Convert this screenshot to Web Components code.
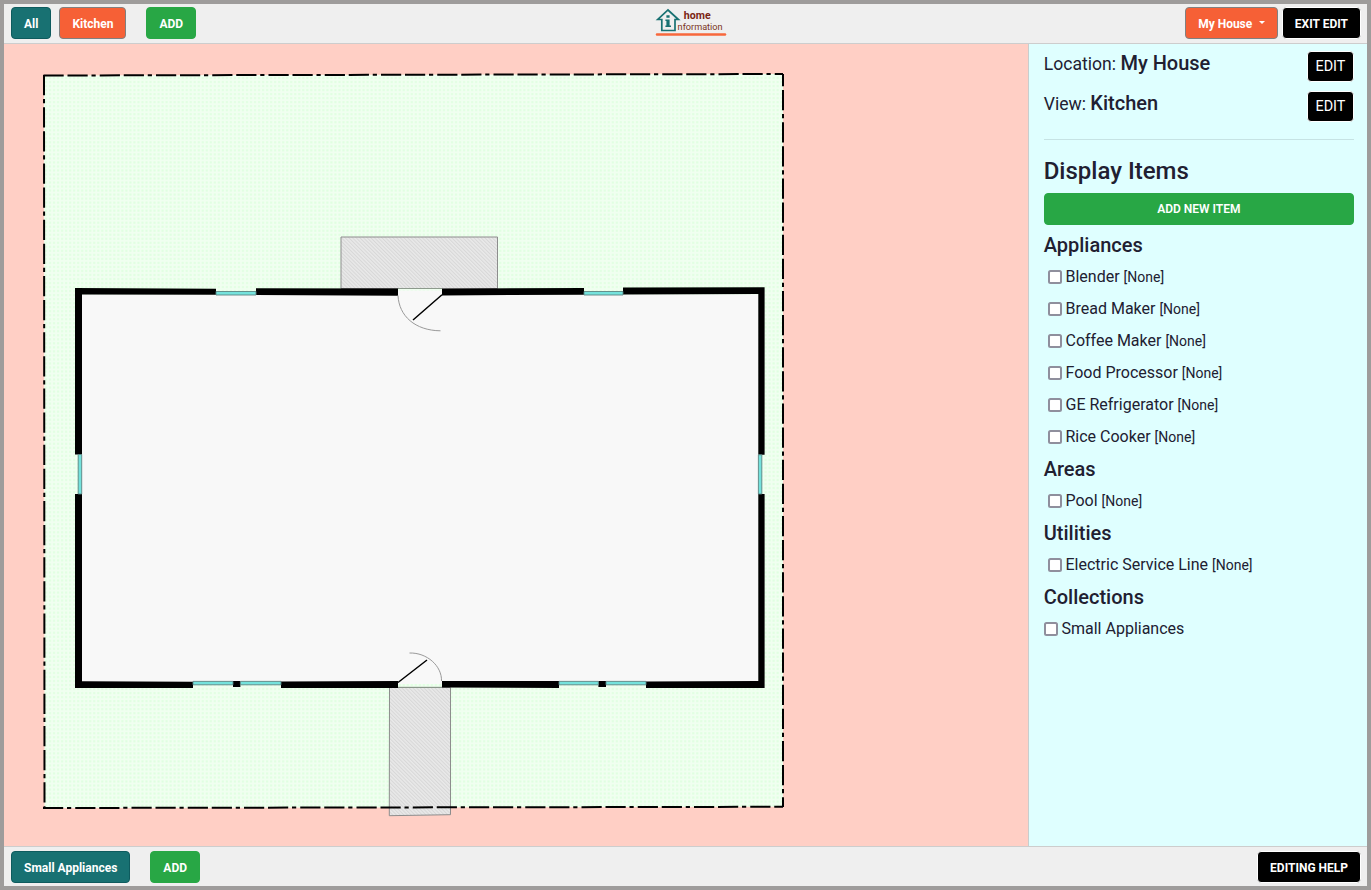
<!DOCTYPE html>
<html lang="en">
<head>
<meta charset="utf-8">
<title>Home Information</title>
<style>
html,body{margin:0;height:100%;background:#9e9c9b}
body{font-family:Roboto,sans-serif;font-size:16px;line-height:1.5;color:#212529}
</style>
</head>
<body>
<hi-app></hi-app>
<script>
function define(name, html, after){
  const t=document.createElement('template');
  t.innerHTML=html;
  customElements.define(name, class extends HTMLElement{
    constructor(){
      super();
      this.attachShadow({mode:'open'}).appendChild(t.content.cloneNode(true));
    }
    connectedCallback(){ if(after) after(this, this.shadowRoot); }
  });
}

define('hi-button', `
<style>
:host{display:inline-block;flex:none}
button{display:flex;align-items:center;justify-content:center;box-sizing:border-box;width:100%;height:32px;margin:0;padding:2px 12px 0;border:1px solid #28a745;border-radius:4px;background:#28a745;color:#fff;font:700 12px/20px Roboto,sans-serif;white-space:nowrap}
:host([kind=teal]) button{background:#187172;border-color:#0e5b5e}
:host([kind=orange]) button{background:#f66036;border-color:#808080}
:host([kind=black]) button{background:#000;border:1px solid #fff;border-radius:4px}
:host([kind=plain]) button{background:#000;border:1px solid #fff;border-radius:4px;font-weight:400;font-size:14.4px;padding:0 7.6px;height:31px;line-height:21px}
:host([kind=wide]){display:block}
:host([kind=wide]) button{font-weight:600;padding-top:0}
i{display:none;width:0;height:0;margin:0 0 3px 6.6px;border:3.5px solid transparent;border-top-color:#fff;border-bottom:0}
:host([menu]) i{display:block}
</style><button><slot></slot><i></i></button>`);

define('hi-logo', `
<style>:host{display:block;width:72px;height:30px}svg{display:block}</style>
<svg width="72" height="30" viewBox="655 7 72 30">
<path d="M661.8 19.5H657.8L668 10L678.4 19.5H675V30.5H661.8Z" fill="none" stroke="#187172" stroke-width="1.7"/>
<path d="M666.4 15.2h3.2v2.6h-3.2zM665.4 19.5h4.2v6h1.4v1.6h-5.6v-1.6h1v-4.4h-1z" fill="#187172"/>
<rect x="677" y="21" width="3" height="10" fill="#efefef"/>
<text x="683.7" y="18.5" font-family="Roboto,sans-serif" font-size="10.6" font-weight="700" fill="#7a2412" textLength="27">home</text>
<text x="677.6" y="29.8" font-family="Roboto,sans-serif" font-size="9.4" fill="#7a3422" textLength="45" lengthAdjust="spacingAndGlyphs">nformation</text>
<path d="M657 34.4H725" stroke="#f8683c" stroke-width="2.5" stroke-linecap="round"/>
</svg>`);

define('hi-bar', `
<style>
:host{display:grid;grid-template-columns:1fr auto 1fr;align-items:start;box-sizing:border-box;padding:3px 6px 0 7px;background:#efefef}
:host([low]){padding-top:4px}
.l{display:flex;align-items:center;gap:8px}
.r{display:flex;align-items:center;gap:4px;justify-content:flex-end}
</style><div class="l"><slot name="left"></slot></div><div><slot></slot></div><div class="r"><slot name="right"></slot></div>`);

define('hi-heading', `
<style>:host{display:block;height:32px;font-size:20px;font-weight:500;line-height:32px}</style><slot></slot>`);

define('hi-item', `
<style>
:host{display:block;height:32px}
label{display:flex;align-items:center;height:32px;padding-left:4px}
:host([flush]) label{padding-left:0}
input{appearance:none;box-sizing:border-box;width:14px;height:14px;margin:0 3.8px 0 0;border:2px solid #8f8f9d;border-radius:2.5px;background:#fff}
div{line-height:24px}
small{font-size:14px}
small:empty{display:none}
</style><label><input type="checkbox"><div><slot></slot> <small></small></div></label>`,
(el,r)=>{ r.querySelector('small').textContent = el.getAttribute('note')||''; });

define('hi-titlerow', `
<style>
:host{display:flex;justify-content:space-between;align-items:flex-start;height:40px}
div{font-size:17.6px;line-height:24px;white-space:nowrap}
b{font-size:20px;font-weight:500}
</style><div><slot name="label"></slot> <b><slot></slot></b></div><hi-button kind="plain">EDIT</hi-button>`);

define('hi-sidebar', `
<style>
:host{display:block;box-sizing:border-box;border-left:1px solid #c9cdcd;background:#dfffff;color:#212031;padding:7px 13px 0 14.7px}
hr{height:1px;border:0;margin:8px 0 15px;background:#c6e3e4}
h2{margin:0;height:38px;font-size:24px;font-weight:500;line-height:32px}
hi-button[kind=wide]{margin-bottom:4px}
</style>
<hi-titlerow><span slot="label">Location:</span>My House</hi-titlerow>
<hi-titlerow><span slot="label">View:</span>Kitchen</hi-titlerow>
<hr>
<h2>Display Items</h2>
<hi-button kind="wide">ADD NEW ITEM</hi-button>
<hi-heading>Appliances</hi-heading>
<hi-item note="[None]">Blender</hi-item>
<hi-item note="[None]">Bread Maker</hi-item>
<hi-item note="[None]">Coffee Maker</hi-item>
<hi-item note="[None]">Food Processor</hi-item>
<hi-item note="[None]">GE Refrigerator</hi-item>
<hi-item note="[None]">Rice Cooker</hi-item>
<hi-heading>Areas</hi-heading>
<hi-item note="[None]">Pool</hi-item>
<hi-heading>Utilities</hi-heading>
<hi-item note="[None]">Electric Service Line</hi-item>
<hi-heading>Collections</hi-heading>
<hi-item flush>Small Appliances</hi-item>`);

define('hi-floorplan', `
<style>:host{display:block;overflow:hidden;background:#ffcfc5}svg{display:block}</style>
<svg width="1024" height="802" viewBox="4 44 1024 802">
<defs>
<pattern id="grass" x="44" y="76" width="4.02" height="4.02" patternUnits="userSpaceOnUse"><rect width="5" height="5" fill="#f0fff0"/><rect x="1" y="1" width="2" height="2" fill="#dfffe0"/></pattern>
<pattern id="hatch" width="2.6" height="2.6" patternUnits="userSpaceOnUse" patternTransform="rotate(-45)"><rect width="3" height="3" fill="#e9e9e9"/><path d="M.6 0V3" stroke="#d3d3d3" stroke-width=".8"/></pattern>
</defs>
<path d="M44 75.5L783 74V806.8L44.5 808Z" fill="url(#grass)"/>
<path d="M341 237H497.5V288.5H341ZM389.5 687.5H450.5V814.7L389.3 815.7Z" fill="url(#hatch)" stroke="#8d8d8d"/>
<g fill="none" stroke="#000" stroke-width="2" stroke-dasharray="20.2 3.8 20.2 3.8 4.2 4.05">
<path d="M43.5 75.5L783 74"/>
<path d="M43 808L783 806.8" stroke-dashoffset="24"/>
<path d="M44 75L44.5 808" stroke-dashoffset="24"/>
<path d="M783 74V807" stroke-dashoffset="8"/>
</g>
<path d="M81.5 294.5H758.5V682H81.5Z" fill="#f8f8f8"/>
<path d="M398 290.5H442V295.4L398 296ZM398 681H442V684H398Z" fill="#f8f8f8"/>
<path d="M398 288.5H442M398 687.3H442" stroke="#8d9a8d"/>
<path d="M75 288L216 288.8V294.8L82 294.6V454.5H75ZM256 288.3L398 288.6V295.8L256 295ZM442 288.7L584 288V294.8L442 295.4ZM623 287.6L764.6 287.2V454.8H758.3V294L623 294.6ZM75 494H82V681.2L193 681.8V688H75ZM281 681.5L398 681V688H281ZM442 681H559V688L442 687.5ZM646 681.5L758.3 681V494H764.6V688L646 688ZM233 681H240.4V687H233ZM598.4 681H606V687H598.4Z"/>
<g fill="#74e2dc" stroke="#5b8582" stroke-width=".9">
<path d="M216 291.5H256V295H216ZM584 291.5H623V295H584ZM78.2 454.5H81.7V494H78.2ZM758.4 454.8H761.8V494H758.4ZM193 681.4H233V684.8H193ZM240.4 681.4H281V684.8H240.4ZM559 681.4H598.4V684.8H559ZM606 681.4H646V684.8H606Z"/>
</g>
<path d="M398 295.5C399 316 415 330.5 440.5 330.8M409.5 653C427 652.5 442 666 441.5 681" fill="none" stroke="#999"/>
<path d="M442 294.8L413 320M398 682.5L427 660" fill="none" stroke="#000" stroke-width="1.5"/>
</svg>`);

define('hi-app', `
<style>
:host{display:grid;grid-template-rows:40px 1fr 40px;box-sizing:border-box;height:100vh;border:4px solid #9e9c9b}
.top{border-bottom:1px solid #cdcdcd}
.bottom{border-top:1px solid #cdcdcd}
main{display:grid;grid-template-columns:1fr 339px;min-height:0}
.add{margin-left:12px}
hi-logo{position:relative;left:5px}
</style>
<hi-bar class="top"><hi-button slot="left" kind="teal">All</hi-button><hi-button slot="left" kind="orange">Kitchen</hi-button><hi-button slot="left" class="add">ADD</hi-button><hi-logo></hi-logo><hi-button slot="right" kind="orange" menu>My House</hi-button><hi-button slot="right" kind="black">EXIT EDIT</hi-button></hi-bar>
<main><hi-floorplan></hi-floorplan><hi-sidebar></hi-sidebar></main>
<hi-bar class="bottom" low><hi-button slot="left" kind="teal">Small Appliances</hi-button><hi-button slot="left" class="add">ADD</hi-button><hi-button slot="right" kind="black">EDITING HELP</hi-button></hi-bar>`);
</script>
</body>
</html>
